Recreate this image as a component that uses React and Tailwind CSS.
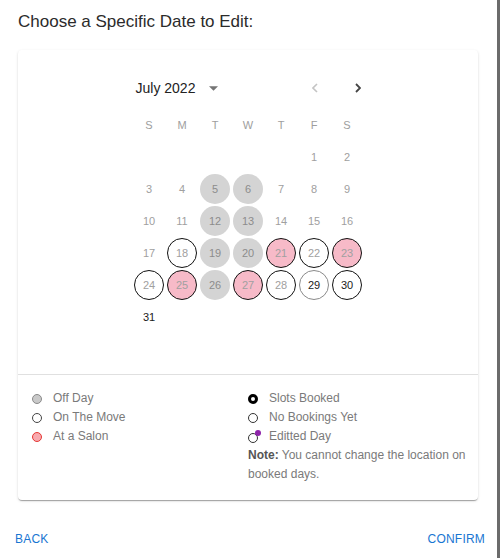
import React from "react";

const OFF = [5, 6, 12, 13, 19, 20, 26];
const SALON = [21, 23, 25, 27];
const MOVE = [18, 22, 24, 28, 30];
const MOVE_LIGHT = [29];

function DayCell({ day }) {
  if (!day) return <div className="w-[33px] h-[32px]" />;
  const future = day >= 29;
  let circle = "border border-transparent";
  if (OFF.includes(day)) circle = "bg-[#d4d4d4] border border-transparent";
  else if (SALON.includes(day)) circle = "bg-[#f7bac8] border-[1.5px] border-[#111]";
  else if (MOVE.includes(day)) circle = "bg-white border-[1.5px] border-[#111]";
  else if (MOVE_LIGHT.includes(day)) circle = "bg-white border-[1.5px] border-[#8a8a8a]";
  return (
    <div className="w-[33px] h-[32px] flex items-center justify-center">
      <div
        className={`w-[30px] h-[30px] rounded-full flex items-center justify-center text-[11px] ${circle} ${
          future ? "text-[#1a1a1a]" : OFF.includes(day) ? "text-[#8c8c8c]" : "text-[#a0a0a0]"
        }`}
      >
        {day}
      </div>
    </div>
  );
}

function LegendItem({ icon, label }) {
  return (
    <div className="flex items-center gap-[11px] h-[19px]">
      {icon}
      <span>{label}</span>
    </div>
  );
}

export default function App() {
  const cells = [...Array(5).fill(null), ...Array.from({ length: 31 }, (_, i) => i + 1)];
  const weekDays = ["S", "M", "T", "W", "T", "F", "S"];

  return (
    <div
      className="w-[500px] h-[558px] flex bg-white overflow-hidden"
      style={{ fontFamily: '"Liberation Sans", Arial, sans-serif' }}
    >
      <div className="flex-1 flex flex-col">
        {/* Title */}
        <div className="h-[50px] pl-[18px] pt-[12px] text-[17px] leading-[20px] text-[#2b2b2b]">
          Choose a Specific Date to Edit:
        </div>

        {/* Card */}
        <div className="ml-[18px] w-[460px] h-[450px] bg-white rounded-[4px] shadow-[0_2px_1px_-1px_rgba(0,0,0,0.2),0_1px_1px_0_rgba(0,0,0,0.14),0_1px_3px_0_rgba(0,0,0,0.12)] flex flex-col">
          <div className="h-[325px] border-b border-[#e0e0e0] flex justify-center pt-[23px]">
            <div className="w-[231px]">
              {/* Header */}
              <div className="h-[30px] flex items-center pl-[3px]">
                <span className="text-[14px] text-[#222]">July 2022</span>
                <svg width="9" height="5" viewBox="0 0 10 5" className="ml-[14px] mt-[1px]">
                  <path d="M0 0 L5 5 L10 0 Z" fill="#757575" />
                </svg>
                <div className="ml-auto flex items-center gap-[31px]">
                  <div className="w-[12px] flex justify-center">
                    <svg width="6" height="10" viewBox="0 0 6 10">
                      <path d="M5 1 L1 5 L5 9" fill="none" stroke="#c4c4c4" strokeWidth="1.6" />
                    </svg>
                  </div>
                  <div className="w-[12px] flex justify-center">
                    <svg width="6" height="10" viewBox="0 0 6 10">
                      <path d="M1 1 L5 5 L1 9" fill="none" stroke="#444" strokeWidth="1.8" />
                    </svg>
                  </div>
                </div>
              </div>

              {/* Weekdays */}
              <div className="mt-[10px] h-[24px] grid grid-cols-7">
                {weekDays.map((d, i) => (
                  <div key={i} className="flex items-center justify-center text-[11px] text-[#9e9e9e]">
                    {d}
                  </div>
                ))}
              </div>

              {/* Days */}
              <div className="mt-[4px] grid grid-cols-7">
                {cells.map((d, i) => (
                  <DayCell key={i} day={d} />
                ))}
              </div>
            </div>
          </div>

          {/* Legend */}
          <div className="flex pt-[14px] text-[12px] leading-[19px] text-[#7a7a7a]">
            <div className="w-[230px] pl-[14px]">
              <LegendItem
                label="Off Day"
                icon={<span className="w-[10px] h-[10px] rounded-full bg-[#c9c9c9] border border-[#8a8a8a]" />}
              />
              <LegendItem
                label="On The Move"
                icon={<span className="w-[10px] h-[10px] rounded-full bg-white border border-[#444]" />}
              />
              <LegendItem
                label="At a Salon"
                icon={<span className="w-[10px] h-[10px] rounded-full bg-[#f8a9ae] border border-[#e53935]" />}
              />
            </div>
            <div className="w-[225px]">
              <LegendItem
                label="Slots Booked"
                icon={<span className="w-[10px] h-[10px] rounded-full bg-white border-[3px] border-black" />}
              />
              <LegendItem
                label="No Bookings Yet"
                icon={<span className="w-[10px] h-[10px] rounded-full bg-white border border-[#333]" />}
              />
              <LegendItem
                label="Editted Day"
                icon={
                  <span className="relative w-[10px] h-[10px] mt-[2px] rounded-full bg-white border border-[#333]">
                    <span className="absolute -top-[4px] -right-[4px] w-[6px] h-[6px] rounded-full bg-[#8e24aa]" />
                  </span>
                }
              />
              <p>
                <b className="font-bold text-[#555]">Note:</b> You cannot change the location on booked days.
              </p>
            </div>
          </div>
        </div>

        {/* Actions */}
        <div className="mt-[31px] flex justify-between pl-[15px] pr-[12px] text-[12px] leading-[16px] tracking-[0.2px] text-[#1976d2]">
          <button>BACK</button>
          <button>CONFIRM</button>
        </div>
      </div>
      <div className="w-[3px] bg-[#6b6b6b]" />
    </div>
  );
}
